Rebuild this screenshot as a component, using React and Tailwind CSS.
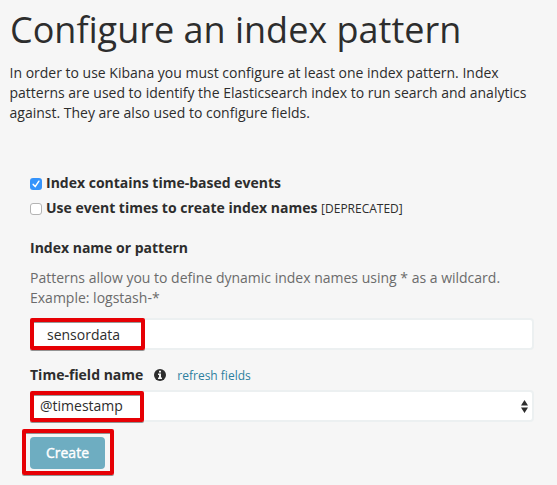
import React from "react";

function Highlight({ className }) {
  return (
    <span
      aria-hidden="true"
      className={`pointer-events-none absolute rounded-[2px] border-4 border-[#e60005] shadow-[0_1px_0_rgba(0,0,0,0.4),inset_0_1px_0_rgba(0,0,0,0.4)] ${className}`}
    />
  );
}

function Checkbox({ checked }) {
  return checked ? (
    <span role="checkbox" aria-checked="true" className="mt-[5px] size-3 shrink-0 rounded-[3px] bg-[#3593fb]">
      <svg viewBox="0 0 12 12" className="size-3" fill="none" stroke="#fff" strokeWidth="1.5" strokeLinecap="round" strokeLinejoin="round">
        <path d="M3.200 6.400 5.200 8.600 8.900 3.200" />
      </svg>
    </span>
  ) : (
    <span role="checkbox" aria-checked="false" className="mt-[5px] size-3 shrink-0 rounded-[3px] border border-[#b4b4b4] bg-white" />
  );
}

export default function App() {
  return (
    <main className="h-[485px] w-[557px] overflow-hidden bg-[#f6f6f6] font-['Open_Sans',sans-serif] text-[14px] leading-5 text-[#2d2d2d]">
      <h1 className="ml-[10px] pt-2 text-[36px] leading-[43px] whitespace-nowrap">Configure an index pattern</h1>
      <p className="mt-3 ml-[9.5px] whitespace-nowrap">
        In order to use Kibana you must configure at least one index pattern. Index
        <br />
        patterns are used to identify the Elasticsearch index to run search and analytics
        <br />
        against. They are also used to configure fields.
      </p>
      <form className="mt-[50px] ml-[30px] w-[504px]">
        <label className="flex h-5 gap-1 font-bold">
          <Checkbox checked />
          <span>Index contains time-based events</span>
        </label>
        <label className="mt-[5px] flex h-5 gap-1 font-bold">
          <Checkbox />
          <span>
            Use event times to create index names <small className="text-[12px] font-normal">[DEPRECATED]</small>
          </span>
        </label>
        <div className="mt-5 h-5 font-bold">Index name or pattern</div>
        <p className="mt-[10px] h-10 text-[#6b6b6b]">
          Patterns allow you to define dynamic index names using * as a wildcard.
          <br />
          Example: logstash-*
        </p>
        <div className="relative mt-[10px] flex h-8 items-center rounded border-2 border-[#ecf0f1] bg-white pt-[2px] pl-[15px]">
          sensordata
          <Highlight className="-top-[2px] -left-[2px] h-8 w-[115px]" />
        </div>
        <div className="mt-[15px] flex h-5 items-center">
          <span className="font-bold">Time-field name</span>
          <svg viewBox="0 0 12 12" className="ml-[11px] size-3">
            <circle cx="6" cy="6" r="6" fill="#2d2d2d" />
            <path d="M5 1.800h2v1.700H5zM4 4.600h3v4h1V10H4V8.600h1V6H4z" fill="#f6f6f6" />
          </svg>
          <span className="mt-px ml-[11px] text-[12px] text-[#2d7f9f]">refresh fields</span>
        </div>
        <div className="relative mt-[5px] flex h-8 items-center justify-between rounded border-2 border-[#ecf0f1] bg-white pr-1 pl-2">
          @timestamp
          <svg viewBox="0 0 7 13" className="h-[13px] w-[7px]" fill="#2d2d2d">
            <path d="M3.500 0 7 5.500H0zM0 7.500h7L3.500 13z" />
          </svg>
          <Highlight className="-top-px -left-[2px] h-[31px] w-[114px]" />
        </div>
        <div className="relative mt-[15px] flex h-8 w-[75px] items-center justify-center rounded bg-[#6eadc1] text-white">
          <span className="[-webkit-text-stroke:0.4px_white]">Create</span>
          <Highlight className="-top-2 -left-2 h-[46px] w-[92px]" />
        </div>
      </form>
    </main>
  );
}
